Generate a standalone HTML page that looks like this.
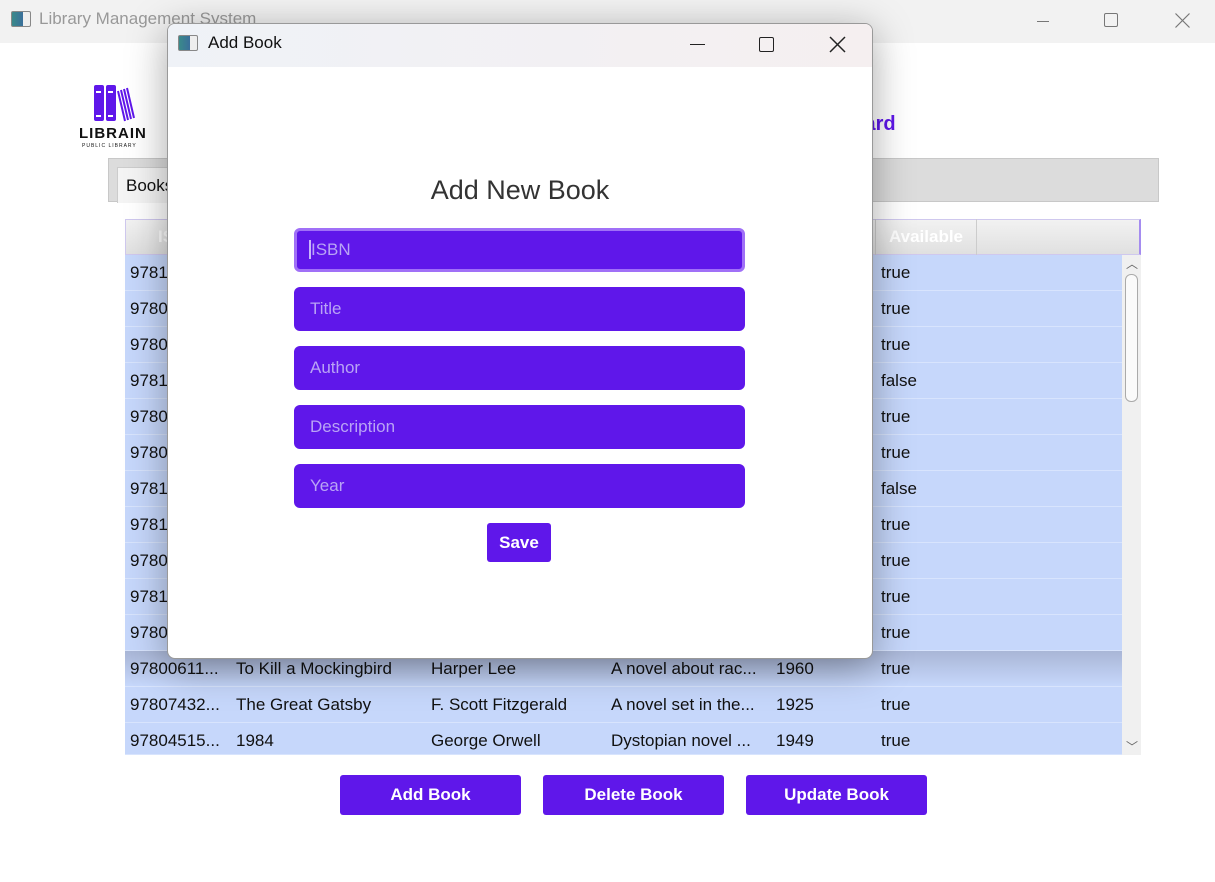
<!DOCTYPE html>
<html><head><style>
*{margin:0;padding:0;box-sizing:border-box}
body{width:1215px;height:882px;position:relative;background:#fff;font-family:"Segoe UI","Liberation Sans",sans-serif;overflow:hidden;color:#111}
.abs{position:absolute}
.tb{left:0;top:0;width:1215px;height:43px;background:#f2f2f2}
.ico{width:20px;height:16px;border:1px solid #888;background:linear-gradient(90deg,#3a8a8a 0,#3a6f9a 60%,#eee 60%);border-radius:2px}
.row{position:absolute;left:125px;width:997px;height:36px;background:#c6d7fb;border-bottom:1px solid #d8e4fd;font-size:17px;line-height:35px}
.row span{position:absolute;white-space:nowrap}
.btn{position:absolute;top:775px;width:181px;height:40px;background:#5f17ea;color:#fff;font-weight:bold;font-size:17px;text-align:center;line-height:40px;border-radius:3px}
.fld{position:absolute;left:294px;width:451px;height:44px;background:#5f17ea;border-radius:6px;color:#b9a4f5;font-size:17px;line-height:44px;padding-left:16px}
</style></head><body>
<div class="abs tb"></div>
<div class="abs ico" style="left:11px;top:11px"></div>
<div class="abs" style="left:39px;top:9px;font-size:17px;color:#999">Library Management System</div>
<div class="abs" style="left:1037px;top:21px;width:12px;border-top:1px solid #777"></div>
<div class="abs" style="left:1104px;top:13px;width:14px;height:14px;border:1px solid #777;border-radius:2px"></div>
<svg class="abs" style="left:1175px;top:13px" width="15" height="15"><path d="M0.5 0.5L14.5 14.5M14.5 0.5L0.5 14.5" stroke="#777" stroke-width="1.2"/></svg>

<!-- logo -->
<svg class="abs" style="left:92px;top:85px" width="46" height="38" viewBox="0 0 46 38">
<rect x="2" y="0" width="10" height="36" rx="2" fill="#5f17ea"/><rect x="14" y="0" width="10" height="36" rx="2" fill="#5f17ea"/>
<rect x="4" y="6" width="5" height="2" fill="#fff"/><rect x="16" y="6" width="5" height="2" fill="#fff"/>
<rect x="4" y="30" width="5" height="2" fill="#fff"/><rect x="16" y="30" width="5" height="2" fill="#fff"/>
<g stroke="#5f17ea" stroke-width="2"><line x1="26" y1="6" x2="33" y2="36"/><line x1="29" y1="5" x2="36" y2="35"/><line x1="32" y1="4" x2="39" y2="34"/><line x1="35" y1="3" x2="42" y2="33"/></g></svg>
<div class="abs" style="left:79px;top:125px;font-size:15px;font-weight:bold;letter-spacing:1px;font-family:'Liberation Sans',sans-serif">LIBRAIN</div>
<div class="abs" style="left:82px;top:143px;font-size:5px;letter-spacing:1px;font-family:'Liberation Sans',sans-serif">PUBLIC LIBRARY</div>
<div class="abs" style="left:700px;top:113px;font-size:20px;font-weight:bold;color:#5f17ea;white-space:nowrap">Librarian Dashboard</div>

<div class="abs" style="left:108px;top:158px;width:1051px;height:44px;background:#dcdcdc;border:1px solid #c8c8c8"></div>
<div class="abs" style="left:117px;top:167px;width:80px;height:36px;background:#f4f4f4;border:1px solid #ccc;border-bottom:none;font-size:17px;padding:8px 8px">Books</div>

<div class="abs" style="left:125px;top:219px;width:1016px;height:36px;background:linear-gradient(#f2f2f2,#e0e0e0);border:1px solid #cfc8ee;border-right:2px solid #a58cf0"></div>
<div class="abs" style="left:875px;top:219px;width:102px;height:36px;border-left:1px solid #ccc;border-right:1px solid #ccc;color:#fff;font-weight:bold;font-size:17px;text-align:center;line-height:36px">Available</div>
<div class="abs" style="left:158px;top:227px;color:#fff;font-weight:bold;font-size:17px">ISBN</div>

<div class="abs" style="left:1122px;top:255px;width:19px;height:500px;background:#f0f0f0"></div>
<div class="abs" style="left:1125px;top:274px;width:13px;height:128px;background:#fafafa;border:1px solid #aaa;border-radius:6px"></div>
<div class="abs" style="left:1126px;top:255px;font-size:12px;color:#666">︿</div>
<div class="abs" style="left:1126px;top:738px;font-size:12px;color:#666">﹀</div>

<div class="row" style="top:255px"><span style="left:5px">97815...</span><span style="left:756px">true</span></div>
<div class="row" style="top:291px"><span style="left:5px">97801...</span><span style="left:756px">true</span></div>
<div class="row" style="top:327px"><span style="left:5px">97803...</span><span style="left:756px">true</span></div>
<div class="row" style="top:363px"><span style="left:5px">97814...</span><span style="left:756px">false</span></div>
<div class="row" style="top:399px"><span style="left:5px">97805...</span><span style="left:756px">true</span></div>
<div class="row" style="top:435px"><span style="left:5px">97806...</span><span style="left:756px">true</span></div>
<div class="row" style="top:471px"><span style="left:5px">97815...</span><span style="left:756px">false</span></div>
<div class="row" style="top:507px"><span style="left:5px">97811...</span><span style="left:756px">true</span></div>
<div class="row" style="top:543px"><span style="left:5px">97803...</span><span style="left:756px">true</span></div>
<div class="row" style="top:579px"><span style="left:5px">97815...</span><span style="left:756px">true</span></div>
<div class="row" style="top:615px"><span style="left:5px">97801...</span><span style="left:756px">true</span></div>
<div class="row" style="top:651px;background:linear-gradient(#a9b6d6,#c6d7fb)"><span style="left:5px">97800611...</span><span style="left:111px">To Kill a Mockingbird</span><span style="left:306px">Harper Lee</span><span style="left:486px">A novel about rac...</span><span style="left:651px">1960</span><span style="left:756px">true</span></div>
<div class="row" style="top:687px"><span style="left:5px">97807432...</span><span style="left:111px">The Great Gatsby</span><span style="left:306px">F. Scott Fitzgerald</span><span style="left:486px">A novel set in the...</span><span style="left:651px">1925</span><span style="left:756px">true</span></div>
<div class="row" style="top:723px;height:32px"><span style="left:5px">97804515...</span><span style="left:111px">1984</span><span style="left:306px">George Orwell</span><span style="left:486px">Dystopian novel ...</span><span style="left:651px">1949</span><span style="left:756px">true</span></div>

<div class="btn" style="left:340px">Add Book</div>
<div class="btn" style="left:543px">Delete Book</div>
<div class="btn" style="left:746px">Update Book</div>

<!-- dialog -->
<div class="abs" style="left:167px;top:23px;width:706px;height:636px;background:#fff;border:1px solid #999;border-radius:8px;box-shadow:0 8px 40px rgba(0,0,0,.35);overflow:hidden">
 <div class="abs" style="left:0;top:0;width:706px;height:43px;background:linear-gradient(90deg,#eff2f7,#f5eff0)"></div>
</div>
<div class="abs ico" style="left:178px;top:35px"></div>
<div class="abs" style="left:208px;top:33px;font-size:17px">Add Book</div>
<div class="abs" style="left:690px;top:44px;width:15px;border-top:1px solid #222"></div>
<div class="abs" style="left:759px;top:37px;width:15px;height:15px;border:1.5px solid #222;border-radius:2px"></div>
<svg class="abs" style="left:829px;top:36px" width="17" height="17"><path d="M1 1L16 16M16 1L1 16" stroke="#222" stroke-width="1.5"/></svg>

<div class="abs" style="left:167px;top:175px;width:706px;text-align:center;font-size:27px;color:#333">Add New Book</div>
<div class="fld" style="top:228px;border:3px solid #a070f7;line-height:38px;padding-left:12px"><span style="border-left:2px solid #c9b6fa;padding-left:0">ISBN</span></div>
<div class="fld" style="top:287px">Title</div>
<div class="fld" style="top:346px">Author</div>
<div class="fld" style="top:405px">Description</div>
<div class="fld" style="top:464px">Year</div>
<div class="abs" style="left:487px;top:523px;width:64px;height:39px;background:#5f17ea;color:#fff;font-weight:bold;font-size:17px;text-align:center;line-height:39px;border-radius:3px">Save</div>
</body></html>
